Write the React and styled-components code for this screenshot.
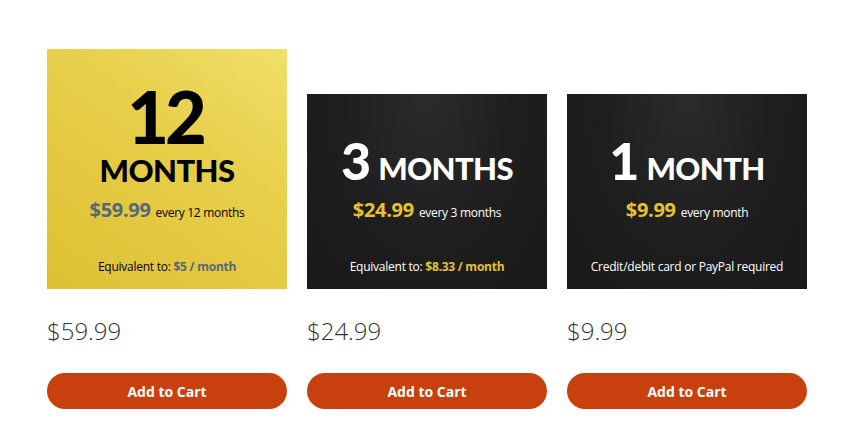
import React from 'react';
import styled, { createGlobalStyle } from 'styled-components';

const plans = [
  {
    id: 12,
    tall: true,
    theme: 'gold',
    number: '12',
    unit: 'MONTHS',
    price: '$59.99',
    every: 'every 12 months',
    note: 'Equivalent to:',
    noteStrong: '$5 / month',
  },
  {
    id: 3,
    theme: 'dark',
    number: '3',
    unit: 'MONTHS',
    price: '$24.99',
    every: 'every 3 months',
    note: 'Equivalent to:',
    noteStrong: '$8.33 / month',
  },
  {
    id: 1,
    theme: 'dark',
    number: '1',
    unit: 'MONTH',
    price: '$9.99',
    every: 'every month',
    note: 'Credit/debit card or PayPal required',
  },
];

const App = () => {
  return (
    <>
      <GlobalStyle />
      <Page>
        <Row>
          {plans.map((p) => (
            <Column key={p.id}>
              <Card $theme={p.theme} $tall={p.tall}>
                <Head>
                  {p.tall ? (
                    <>
                      <BigNumber>{p.number}</BigNumber>
                      <StackedUnit>{p.unit}</StackedUnit>
                    </>
                  ) : (
                    <InlineTitle>
                      <InlineNumber>{p.number}</InlineNumber>
                      <InlineUnit>{p.unit}</InlineUnit>
                    </InlineTitle>
                  )}
                </Head>
                <PriceLine>
                  <Accent $theme={p.theme}>{p.price}</Accent>
                  <Every>{p.every}</Every>
                </PriceLine>
                <Note>
                  {p.note}
                  {p.noteStrong && <NoteStrong $theme={p.theme}> {p.noteStrong}</NoteStrong>}
                </Note>
              </Card>
              <Price>{p.price}</Price>
              <CartButton>Add to Cart</CartButton>
            </Column>
          ))}
        </Row>
      </Page>
    </>
  );
};

const GlobalStyle = createGlobalStyle`
  body {
    margin: 0;
    background: #ffffff;
    font-family: "Open Sans", "Liberation Sans", sans-serif;
  }
`;

const Page = styled.div`
  padding: 49px 0 0 47px;
`;

const Row = styled.div`
  display: flex;
  gap: 20px;
  align-items: flex-end;
`;

const Column = styled.div`
  width: 240px;
  display: flex;
  flex-direction: column;
`;

const Card = styled.div`
  height: ${(p) => (p.$tall ? '240px' : '195px')};
  display: flex;
  flex-direction: column;
  align-items: center;
  text-align: center;
  color: ${(p) => (p.$theme === 'gold' ? '#000' : '#fff')};
  background: ${(p) =>
    p.$theme === 'gold'
      ? 'linear-gradient(215deg, #f0df6a 0%, #e8cf4a 40%, #ddc033 100%)'
      : 'radial-gradient(ellipse at 50% 0%, #2b2b2b 0%, #1e1e1e 55%, #191919 100%)'};
`;

const Head = styled.div`
  flex: 1;
  display: flex;
  flex-direction: column;
  align-items: center;
  justify-content: flex-end;
  padding-bottom: 12px;
`;

const BigNumber = styled.div`
  font-family: "Lato", sans-serif;
  font-weight: 900;
  font-size: 72px;
  line-height: 56px;
  letter-spacing: -4px;
  margin-right: 4px;
`;

const StackedUnit = styled.div`
  font-family: "Lato", sans-serif;
  font-weight: 900;
  font-size: 31px;
  line-height: 32px;
  letter-spacing: -0.6px;
  margin-top: 10px;
`;

const InlineTitle = styled.div`
  display: flex;
  align-items: baseline;
  gap: 7px;
  font-family: "Lato", sans-serif;
  font-weight: 900;
  line-height: 1;
`;

const InlineNumber = styled.span`
  font-size: 52px;
`;

const InlineUnit = styled.span`
  font-size: 31px;
  letter-spacing: -0.6px;
`;

const PriceLine = styled.div`
  display: flex;
  align-items: baseline;
  gap: 5px;
  line-height: 24px;
`;

const Accent = styled.span`
  font-weight: 700;
  font-size: 20px;
  letter-spacing: -0.3px;
  color: ${(p) => (p.$theme === 'gold' ? '#56677a' : '#e6c232')};
`;

const Every = styled.span`
  font-size: 12px;
  letter-spacing: -0.3px;
`;

const Note = styled.div`
  margin-top: 34px;
  padding-bottom: 14px;
  font-size: 12px;
  line-height: 16px;
  letter-spacing: -0.25px;
`;

const NoteStrong = styled.span`
  font-weight: 700;
  color: ${(p) => (p.$theme === 'gold' ? '#56677a' : '#e6c232')};
`;

const Price = styled.div`
  margin-top: 26px;
  font-weight: 300;
  font-size: 24px;
  line-height: 32px;
  color: #333;
`;

const CartButton = styled.button`
  margin-top: 26px;
  height: 36px;
  width: 240px;
  border: none;
  border-radius: 18px;
  background: #c9400f;
  color: #fff;
  font-family: "Open Sans", sans-serif;
  font-weight: 700;
  font-size: 14px;
  cursor: pointer;
`;

export default App;
